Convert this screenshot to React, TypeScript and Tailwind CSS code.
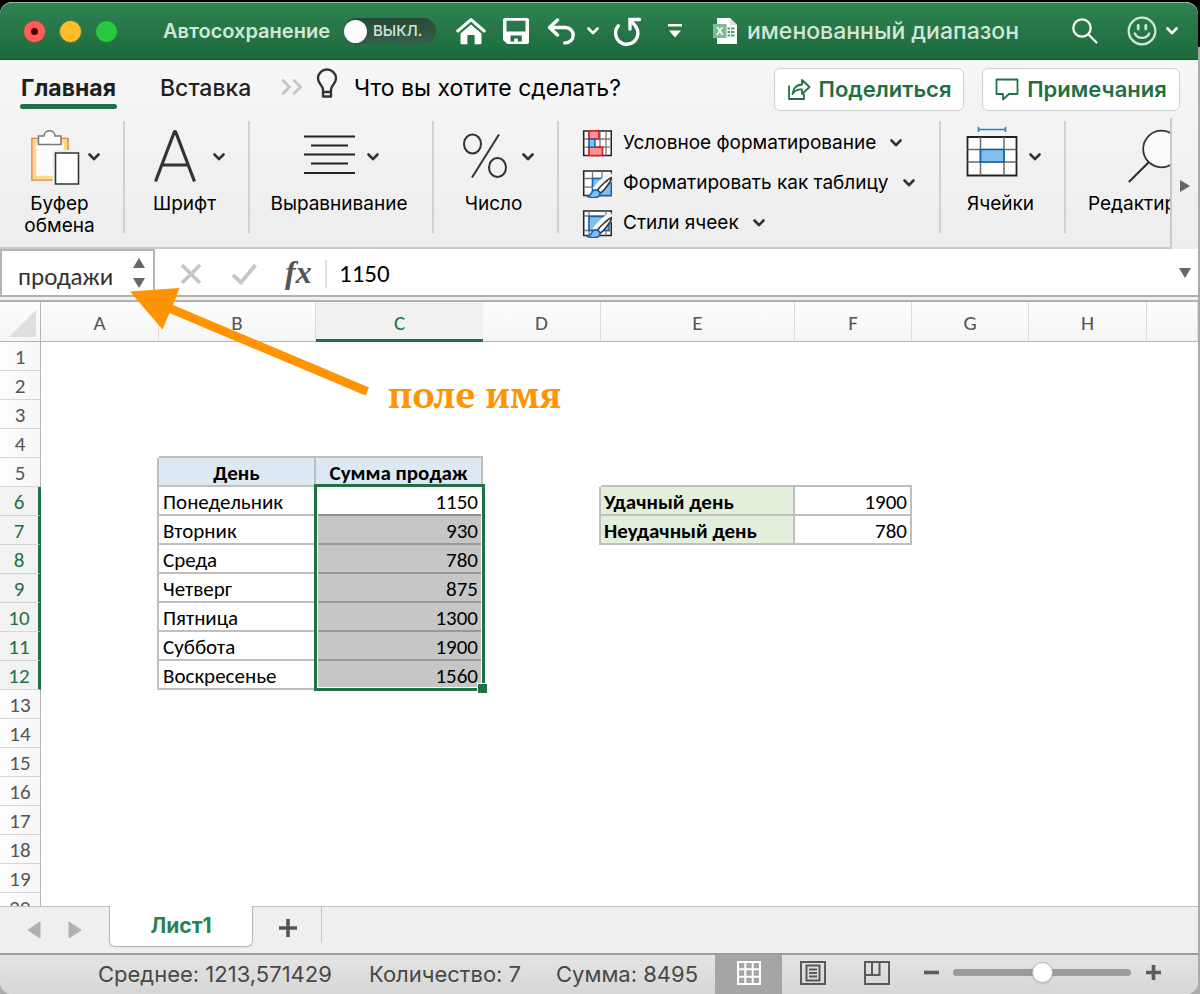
import type { ReactNode } from "react";

const UI = "font-['Inter','Liberation_Sans',sans-serif]";
const SHEET = "font-['Carlito','Lato','Noto_Sans',sans-serif]";

function Chevron({ className = "" }: { className?: string }) {
  return (
    <svg viewBox="0 0 12 8" className={`h-2 w-3 shrink-0 ${className}`} fill="none" stroke="currentColor" strokeWidth="2.6" strokeLinecap="round" strokeLinejoin="round" aria-hidden="true">
      <path d="M1.5 1.5 6 6.2l4.5-4.7" />
    </svg>
  );
}

function TitleBar() {
  return (
    <header className="flex h-[58px] shrink-0 items-center rounded-t-xl border-t border-b border-t-[#8fb8a0] border-b-[#17532f] bg-linear-to-b from-[#2f8252] to-[#1c6a3c] pr-[20px] pl-[23px] text-white">
      <div className="flex gap-[13px]">
        <button aria-label="Закрыть" className="flex size-[23px] items-center justify-center rounded-full border border-[#6b5a3f] bg-[#ff5f57]">
          <span className="size-[7px] rounded-full bg-[#4d0000]" />
        </button>
        <button aria-label="Свернуть" className="size-[23px] rounded-full border border-[#5d7a2c] bg-[#ffbd2e]" />
        <button aria-label="Развернуть" className="size-[23px] rounded-full border border-[#1d7a38] bg-[#28c840]" />
      </div>
      <span className="ml-[45px] w-[181px] text-[20px] font-semibold whitespace-nowrap text-[#d3e6da]">Автосохранение</span>
      <button role="switch" aria-checked="false" aria-label="Автосохранение" className="flex h-[26px] w-[92px] shrink-0 items-center gap-1.5 rounded-full bg-linear-to-b from-[#274a35] to-[#33604a] text-[15px] font-medium text-[#d3e6da]">
        <span className="size-[23px] rounded-full bg-white shadow" />
        ВЫКЛ.
      </button>
      <button aria-label="Домой" className="ml-5">
        <svg viewBox="0 0 30 28" className="h-7 w-[30px]" aria-hidden="true">
          <path d="M1.8 14 15 2.6 28.2 14" fill="none" stroke="white" strokeWidth="3" strokeLinecap="round" strokeLinejoin="round" />
          <path d="M4.5 16.5 15 7.6l10.5 8.9V26a1.2 1.2 0 0 1-1.2 1.2H18.600V18h-7.200v9.200H5.700A1.200 1.200 0 0 1 4.500 26Z" fill="white" />
        </svg>
      </button>
      <button aria-label="Сохранить" className="ml-4">
        <svg viewBox="0 0 28 28" className="size-7" aria-hidden="true">
          <path fill="white" fillRule="evenodd" d="M3 1h22a2 2 0 0 1 2 2v22a2 2 0 0 1-2 2H5.500L1 23V3a2 2 0 0 1 2-2Zm1.500 2.800v10.700h19V3.800Zm4 14.700v6h3.700v-3h3.600v3h4v-6Z" />
        </svg>
      </button>
      <button aria-label="Отменить" className="ml-[17px]">
        <svg viewBox="0 0 30 28" className="h-7 w-[30px]" fill="none" stroke="white" strokeWidth="3.400" strokeLinecap="round" strokeLinejoin="round" aria-hidden="true">
          <path d="M10.500 3 2.500 10.500l8 7.500M3 10.500h15.500a7.700 7.700 0 0 1 0 15.400h-.8" />
        </svg>
      </button>
      <button aria-label="Список отмены" className="ml-[10px]"><Chevron /></button>
      <button aria-label="Повторить" className="ml-[15px]">
        <svg viewBox="0 0 30 30" className="size-[30px]" fill="none" stroke="white" strokeWidth="3.400" strokeLinecap="round" aria-hidden="true">
          <path d="M4.200 9.800A11.200 11.200 0 1 0 21.800 10.500" />
          <path d="M25.500 3.500H16V13" strokeLinejoin="miter" />
          <path d="m16.500 4 5.300 6.500" />
        </svg>
      </button>
      <button aria-label="Настроить панель" className="ml-6">
        <svg viewBox="0 0 14 16" className="h-4 w-3.5" fill="white" aria-hidden="true">
          <path d="M0 1h14v2.600H0ZM1 7.500h12L7 14.500Z" />
        </svg>
      </button>
      <svg viewBox="0 0 26 30" className="ml-[31px] h-[30px] w-[26px] shrink-0" aria-hidden="true">
        <path d="M4 2h13l7 7v19H4Z" fill="white" />
        <path d="M17 2v7h7Z" fill="#d5e3da" />
        <rect x="0" y="8" width="13.500" height="14" fill="#7db897" />
        <text x="6.700" y="19" textAnchor="middle" fontFamily="Inter" fontSize="11" fontWeight="600" fill="white">X</text>
        <path d="M14.500 12.500h2.500m1 0h3.500m-7 3.500h2.500m1 0h3.500m-7 3.500h2.500m1 0h3.500" stroke="#4b9a70" strokeWidth="1.800" />
      </svg>
      <h1 className="ml-2 flex-1 text-[23px] leading-8 font-medium whitespace-nowrap text-[#d3e6da]">именованный диапазон</h1>
      <button aria-label="Поиск">
        <svg viewBox="0 0 28 28" className="size-7" fill="none" stroke="white" strokeWidth="2.200" strokeLinecap="round" aria-hidden="true">
          <circle cx="11" cy="11" r="8.700" /><path d="m17.500 17.500 8 8" />
        </svg>
      </button>
      <button aria-label="Отзыв" className="ml-7 flex items-center gap-[9px]">
        <svg viewBox="0 0 30 30" className="size-[30px]" fill="none" stroke="#d3e6da" strokeWidth="2.300" strokeLinecap="round" aria-hidden="true">
          <circle cx="15" cy="15" r="13.300" /><path d="M11.200 9.500v3.500m7.600-3.500v3.500" strokeWidth="2.800" /><path d="M7.800 17.500c2.500 5.800 11.900 5.800 14.400 0" />
        </svg>
        <Chevron />
      </button>
    </header>
  );
}

function TabRow() {
  return (
    <nav className="flex h-[58px] shrink-0 items-center pr-[18px] pl-5 text-[#1f1f1f]">
      <button className="mt-1 flex w-[97px] flex-col text-[23px] leading-7 font-bold whitespace-nowrap">
        Главная
        <span className="mt-0.5 h-[5px] w-full rounded-full bg-[#1f7145]" />
      </button>
      <button className="mb-0.5 ml-[43px] w-[92px] text-left text-[23px] font-medium whitespace-nowrap">Вставка</button>
      <button aria-label="Другие вкладки" className="mb-1 ml-[29px]">
        <svg viewBox="0 0 22 16" className="h-4 w-[22px]" fill="none" stroke="#c4c4c4" strokeWidth="2.600" strokeLinecap="round" aria-hidden="true">
          <path d="m2 1.500 6.500 6.500L2 14.500m11-13L19.500 8 13 14.500" />
        </svg>
      </button>
      <button className="mb-0.5 ml-[13px] flex items-center gap-4 text-[23px] text-black">
        <svg viewBox="0 0 22 32" className="mb-2 h-8 w-[22px]" fill="none" stroke="#333" strokeWidth="2.400" aria-hidden="true">
          <path d="M7 24v-2.500C7 17.500 2 15.500 2 10.500a9 9 0 0 1 18 0c0 5-5 7-5 11V24Z M7 24v4.500h8V24" strokeLinejoin="round" />
        </svg>
        <span className="whitespace-nowrap">Что вы хотите сделать?</span>
      </button>
      <div className="ml-auto flex gap-[18px] text-[22px] font-semibold text-[#1f7145]">
        <button className="flex h-[43px] w-[190px] items-center justify-center gap-2 rounded-md border border-[#cfcfcf] bg-white">
          <svg viewBox="0 0 24 24" className="size-6 shrink-0" fill="none" stroke="currentColor" strokeWidth="1.800" strokeLinejoin="round" aria-hidden="true">
            <path d="M2 8.500V22h15v-5" /><path d="M5.500 17c.8-6 4.500-9.300 9.500-9.500V3l7.500 7-7.500 7v-4.500c-4-.3-7 1-9.500 4.500Z" />
          </svg>
          Поделиться
        </button>
        <button className="flex h-[43px] w-[198px] items-center justify-center gap-2 rounded-md border border-[#cfcfcf] bg-white">
          <svg viewBox="0 0 24 24" className="size-6 shrink-0" fill="none" stroke="currentColor" strokeWidth="1.800" strokeLinejoin="round" aria-hidden="true">
            <path d="M1.500 2.500h21V17H14l-6 5.500V17H1.500Z" />
          </svg>
          Примечания
        </button>
      </div>
    </nav>
  );
}

function IconBox({ children }: { children: ReactNode }) {
  return (
    <svg viewBox="0 0 56 64" className="h-16 w-14 shrink-0" fill="none" aria-hidden="true">
      {children}
    </svg>
  );
}

function Group({ label, width, icon }: { label: string; width: string; icon: ReactNode }) {
  return (
    <button className={`flex h-28 shrink-0 flex-col items-center border-r-2 border-[#d0d0d0] pt-0.5 ${width}`}>
      <span className="flex items-center gap-2 text-[#333]">{icon}<Chevron className="mt-1" /></span>
      <span className="mt-1.5 pr-1 text-[19px] leading-[22px] whitespace-pre text-black">{label}</span>
    </button>
  );
}

function Brush() {
  return (
    <>
      <path d="M30.500 7C26 9 18 17 14 22" stroke="#f4f4f4" strokeWidth="9" />
      <path d="M29.800 8.500C26 10 18 17.500 15.500 21l3.300 3C22.500 21 29 13 29.800 8.500Z" fill="white" stroke="#333" strokeWidth="1.600" />
      <path d="M5 27c3 0 4-1.500 4.800-3.500.9-2.600 4.600-3.600 7-1.200 2.200 2.300 1.200 5-2 6-3.400 1-7.300.2-9.800-1.300Z" fill="#83beec" stroke="#0f62b5" strokeWidth="1.600" />
    </>
  );
}

function StyleItem({ label, icon }: { label: string; icon: ReactNode }) {
  return (
    <button className="flex h-10 items-center text-[19px] whitespace-nowrap text-black">
      <svg viewBox="0 0 30 29" className="mr-[11px] h-[29px] w-[30px]" fill="none" aria-hidden="true">{icon}</svg>
      {label}
      <Chevron className="ml-3.5 text-[#333]" />
    </button>
  );
}

function Ribbon() {
  return (
    <div className="flex h-[131px] shrink-0">
      <div className="flex min-w-0 flex-1 overflow-hidden border-r-2 border-b-2 border-[#c9c9c9] pt-[3px]">
        <Group label={"Буфер\nобмена"} width="w-[125px]" icon={
          <IconBox>
            <path d="M8 15.500h36v41.500H8Z" fill="#fbfbfb" stroke="#e8833a" strokeWidth="1.600" />
            <path d="M10.500 18h31v36.500h-31Z" stroke="#f9d98c" strokeWidth="3.500" />
            <path d="M14.500 21.500V13H20c.5-7 10.500-7 11 0h6v8.500Z" fill="white" stroke="#777" strokeWidth="1.500" />
            <path d="M28.500 27H54v36H28.500Z" fill="#efefef" />
            <path d="M31.500 30h23v31h-23Z" fill="white" stroke="#333" strokeWidth="1.600" />
          </IconBox>
        } />
        <Group label="Шрифт" width="w-[125px]" icon={
          <IconBox>
            <path d="M6.500 58.500 25.500 8.500h1L45.500 58.500M13 42h26.500" stroke="#333" strokeWidth="3.200" strokeLinejoin="bevel" />
          </IconBox>
        } />
        <Group label="Выравнивание" width="w-[184px]" icon={
          <IconBox>
            <path d="M1 13.500h51M8 22.500h37M1 31.500h51M8 40.500h37M1 50h51" stroke="#222" strokeWidth="2" />
          </IconBox>
        } />
        <Group label="Число" width="w-[125px]" icon={
          <IconBox>
            <ellipse cx="14.500" cy="21" rx="8.500" ry="9.500" stroke="#333" strokeWidth="2" />
            <ellipse cx="39.500" cy="44.500" rx="8.500" ry="9.500" stroke="#333" strokeWidth="2" />
            <path d="M41 11.500 14 54.500" stroke="#333" strokeWidth="2" />
          </IconBox>
        } />
        <div className="h-28 w-[382px] shrink-0 border-r-2 border-[#d0d0d0] pt-0.5 pl-[23px]">
          <StyleItem label="Условное форматирование" icon={
            <>
              <path d="M1.700 2h27.600v24.500H1.700Z" fill="white" stroke="#222" strokeWidth="1.600" />
              <path d="M7 2v24.500M18 2v24.500M24 2v24.500M1.700 10h27.600M1.700 18.200h27.600" stroke="#777" strokeWidth="1.300" />
              <path d="M7 2h10v8H7Zm0 16.200h13.500v8.300H7Z" fill="#ff9292" stroke="#d8221f" strokeWidth="1.700" />
              <path d="M7 10h6v8.200H7Z" fill="#83beec" stroke="#0f62b5" strokeWidth="1.500" />
            </>
          } />
          <StyleItem label="Форматировать как таблицу" icon={
            <>
              <path d="M1.700 2h27.600v24.500H1.700Z" fill="white" stroke="#222" strokeWidth="1.600" />
              <path d="M10.500 2v24.500M20 2v24.500M1.700 9.500h27.600M1.700 18.200h27.600" stroke="#777" strokeWidth="1.300" />
              <path d="M10.500 9.500h18.800v17H10.500Z" fill="#83beec" stroke="#0f62b5" strokeWidth="1.500" />
              <Brush />
            </>
          } />
          <StyleItem label="Стили ячеек" icon={
            <>
              <path d="M1.700 2h27.600v24.500H1.700Z" fill="white" stroke="#222" strokeWidth="1.600" />
              <path d="M7 2v24.500M24 2v24.500M1.700 7h27.600M1.700 21.500h27.600" stroke="#777" strokeWidth="1.300" />
              <path d="M7 7.500h20v14H7Z" fill="#83beec" stroke="#0f62b5" strokeWidth="1.500" />
              <Brush />
            </>
          } />
        </div>
        <Group label="Ячейки" width="w-[125px]" icon={
          <IconBox>
            <path d="M2.500 14H51.500v38.500H2.500Z" fill="white" stroke="#222" strokeWidth="1.800" />
            <path d="M15.500 14v38.500M39 14v38.500M2.500 26.500h49M2.500 39h49" stroke="#6e6a62" strokeWidth="1.500" />
            <path d="M15.500 26.500H39V39H15.500Z" fill="#83beec" stroke="#0f62b5" strokeWidth="1.700" />
            <path d="M13.500 6.500h27M13.500 4v5M40.500 4v5" stroke="#1c86d1" strokeWidth="1.700" />
          </IconBox>
        } />
        <button className="flex h-28 min-w-0 flex-1 flex-col items-start pt-0.5 pl-[22px]">
          <svg viewBox="0 0 80 64" className="ml-10 h-16 w-20 shrink-0" fill="none" stroke="#333" strokeWidth="1.800" aria-hidden="true">
            <circle cx="33.500" cy="26" r="18.300" fill="#fbfbfb" /><path d="M20.500 39.500.8 59" strokeWidth="2.200" />
          </svg>
          <span className="mt-1.5 text-[19px] leading-[22px] whitespace-nowrap text-black">Редактирование</span>
        </button>
      </div>
      <button aria-label="Прокрутить ленту" className="flex w-[26px] shrink-0 items-center pt-1 pl-2">
        <svg viewBox="0 0 10 12" className="h-3 w-2.5" aria-hidden="true"><path d="M0 0v12l10-6Z" fill="#666" /></svg>
      </button>
    </div>
  );
}

function FormulaBar() {
  return (
    <div className="flex h-12 shrink-0 items-center border-b-2 border-[#b0b0b0] bg-white">
      <div className="flex h-full w-[155px] shrink-0 items-center border-2 border-b-0 border-[#b5b5b5] pt-1 pr-[7px] pl-4">
        <input aria-label="Имя" defaultValue="продажи" className={`mt-1 w-[114px] min-w-0 bg-transparent text-[25px] leading-8 text-[#333] outline-none ${SHEET}`} />
        <button aria-label="Выбрать имя" className="mb-1">
          <svg viewBox="0 0 14 32" className="h-8 w-3.5" fill="#666" aria-hidden="true"><path d="M7 1l6 10H1Zm0 30 6-10H1Z" /></svg>
        </button>
      </div>
      <button aria-label="Отмена" className="mt-1 ml-[25px]">
        <svg viewBox="0 0 22 22" className="size-[22px]" stroke="#c6c6c6" strokeWidth="3.800" aria-hidden="true"><path d="m2 2 18 18M20 2 2 20" /></svg>
      </button>
      <button aria-label="Ввод" className="mt-1 ml-[29px]">
        <svg viewBox="0 0 26 22" className="h-[22px] w-[26px]" fill="none" stroke="#c6c6c6" strokeWidth="3.800" aria-hidden="true"><path d="m2 12 8 7.500L24.500 2" /></svg>
      </button>
      <button aria-label="Вставить функцию" className="ml-7 w-8 text-left font-['Liberation_Serif',serif] text-[32px] leading-8 font-bold text-[#555] italic">fx</button>
      <span className="mt-1 ml-2 h-7 w-0.5 bg-[#dedede]" />
      <input aria-label="Строка формул" defaultValue="1150" className={`mt-1 ml-3 min-w-0 flex-1 bg-transparent text-[25px] leading-8 text-black outline-none ${SHEET}`} />
      <button aria-label="Развернуть строку формул" className="mt-0.5 mr-[7px]">
        <svg viewBox="0 0 12 10" className="h-2.5 w-3" aria-hidden="true"><path d="M0 0h12L6 10Z" fill="#666" /></svg>
      </button>
    </div>
  );
}

const columns = ["A", "B", "C", "D", "E", "F", "G", "H", ""];
const colWidths = ["w-[118px]", "w-[157px]", "w-[167px]", "w-[118px]", "w-[194px]", "w-[117px]", "w-[117px]", "w-[118px]", "w-auto"];
const sales: [string, number][] = [
  ["Понедельник", 1150],
  ["Вторник", 930],
  ["Среда", 780],
  ["Четверг", 875],
  ["Пятница", 1300],
  ["Суббота", 1900],
  ["Воскресенье", 1560],
];
const summary: Record<number, [string, number]> = { 6: ["Удачный день", 1900], 7: ["Неудачный день", 780] };

const LINE = "border-[#bfbfbf]";

function Cell({ row, col }: { row: number; col: string }) {
  if (row === 4 && (col === "B" || col === "C")) return <td className={`border-b-2 ${LINE}`} />;
  if (row === 5 && col === "A") return <td className={`border-r-2 ${LINE}`} />;
  if (row === 5 && col === "B") return <td className={`border-r-2 border-b-2 bg-[#dce9f5] text-center font-bold ${LINE}`}>День</td>;
  if (row === 5 && col === "C") return <td className={`border-r-2 border-b-2 bg-[#dce9f5] text-center font-bold whitespace-nowrap ${LINE}`}>Сумма продаж</td>;
  if (row === 5 && (col === "E" || col === "F")) return <td className={`border-b-2 ${LINE}`} />;
  if (row >= 6 && row <= 12) {
    const [day, total] = sales[row - 6];
    if (col === "A") return <td className={`border-r-2 ${LINE}`} />;
    if (col === "B") return <td className={`border-r-2 border-b-2 pl-1 ${LINE}`}>{day}</td>;
    if (col === "C")
      return (
        <td className={`relative border-b-2 pr-[5px] text-right ${row === 6 ? "border-[#8f8f8f] bg-white" : "border-[#999] bg-[#c6c6c6]"}`}>
          {total}
          {row === 6 && (
            <span className="absolute -top-[3px] -right-0.5 -left-0.5 z-10 h-[207px] border-[3px] border-[#1f7145] inset-ring inset-ring-white">
              <span className="absolute -right-[5px] -bottom-[5px] size-[9px] bg-[#1f7145] outline-1 outline-white" />
            </span>
          )}
        </td>
      );
  }
  const entry = summary[row];
  if (entry) {
    if (col === "D") return <td className={`border-r-2 ${LINE}`} />;
    if (col === "E") return <td className={`border-r-2 border-b-2 bg-[#e2efda] pl-[3px] font-bold whitespace-nowrap ${LINE}`}>{entry[0]}</td>;
    if (col === "F") return <td className={`border-r-2 border-b-2 pr-[3px] text-right ${LINE}`}>{entry[1]}</td>;
  }
  return <td />;
}

function Sheet() {
  const rows = Array.from({ length: 20 }, (_, i) => i + 1);
  return (
    <main className="mt-[3px] min-h-0 flex-1 overflow-hidden border-t-2 border-[#b0b0b0] bg-white">
      <table className={`w-full table-fixed border-separate border-spacing-0 text-[21px] leading-6 text-black ${SHEET}`}>
        <thead>
          <tr className="h-10 bg-linear-to-b from-[#fdfdfd] to-[#f5f5f5] text-[#555]">
            <th className="w-[41px] border-r border-b border-[#b5b5b5] p-0 align-bottom">
              <svg viewBox="0 0 27 27" className="mb-1 ml-[9px] size-[27px]" aria-hidden="true"><path d="M27 0v27H0Z" fill="#dedede" /></svg>
            </th>
            {columns.map((c, i) => (
              <th
                key={i}
                scope="col"
                className={`${colWidths[i]} p-0 pt-0.5 font-normal ${c === "C" ? "border-b-[3px] border-[#1f7145] bg-[#f1f1f1] pt-1 text-[#1f7145]" : "border-r border-b border-r-[#dcdcdc] border-b-[#b5b5b5]"}`}
              >
                {c}
              </th>
            ))}
          </tr>
        </thead>
        <tbody>
          {rows.map((r) => {
            const on = r >= 6 && r <= 12;
            return (
              <tr key={r} className="h-[29px] [&>td]:py-0 [&>td]:pt-0.5">
                <th scope="row" className={`border-b border-b-[#d5d5d5] p-0 pt-0.5 font-normal ${on ? "border-r-[3px] border-r-[#1f7145] bg-[#f2f2f2] text-[#1f7145]" : "border-r border-r-[#b5b5b5] bg-linear-to-r from-[#fdfdfd] to-[#f6f6f6] text-[#555]"}`}>{r}</th>
                {columns.map((c, i) => <Cell key={i} row={r} col={c} />)}
              </tr>
            );
          })}
        </tbody>
      </table>
    </main>
  );
}

function SheetTabs() {
  return (
    <div className="flex h-[47px] shrink-0 items-start border-t border-[#c0c0c0] bg-[#efefef]">
      <button aria-label="Предыдущий лист" className="mt-3.5 ml-[27px]">
        <svg viewBox="0 0 14 18" className="h-[18px] w-3.5" aria-hidden="true"><path d="M13 1v16L1 9Z" fill="#b0b0b0" stroke="#b0b0b0" strokeLinejoin="round" /></svg>
      </button>
      <button aria-label="Следующий лист" className="mt-3.5 ml-[27px]">
        <svg viewBox="0 0 14 18" className="h-[18px] w-3.5" aria-hidden="true"><path d="M1 1v16l12-8Z" fill="#b0b0b0" stroke="#b0b0b0" strokeLinejoin="round" /></svg>
      </button>
      <button className="-mt-px ml-[27px] h-[41px] w-[144px] rounded-b-md border border-t-0 border-[#b5b5b5] bg-white text-[21px] font-bold text-[#268350] shadow-xs">Лист1</button>
      <button aria-label="Добавить лист" className="mt-[11px] ml-[25px]">
        <svg viewBox="0 0 20 20" className="size-5" stroke="#555" strokeWidth="3.600" aria-hidden="true"><path d="M10 1v18M1 10h18" /></svg>
      </button>
      <span className="ml-[23px] h-9 w-px bg-[#c4c4c4]" />
    </div>
  );
}

function StatusBar() {
  return (
    <footer className="flex h-[41px] shrink-0 items-center rounded-b-xl border-t-2 border-[#9c9c9c] bg-linear-to-b from-[#e4e4e4] to-[#d6d6d6] pr-[37px] pl-[98px] text-[22px] whitespace-nowrap text-[#484848]">
      <span className="w-[271px]">Среднее: 1213,571429</span>
      <span className="w-[187px]">Количество: 7</span>
      <span className="w-[159px]">Сумма: 8495</span>
      <button aria-label="Обычный" className="flex h-full w-[67px] shrink-0 items-center justify-center bg-[#a5a5a5] pb-1">
        <svg viewBox="0 0 24 24" className="size-6" fill="none" stroke="white" strokeWidth="2" aria-hidden="true"><path d="M1 1h22v22H1ZM8.300 1v22M15.700 1v22M1 8.300h22M1 15.700h22" /></svg>
      </button>
      <div className="flex min-w-0 flex-1 items-center pb-1">
        <button aria-label="Разметка страницы" className="ml-[18px]">
          <svg viewBox="0 0 26 24" className="h-6 w-[26px]" fill="none" stroke="#595959" strokeWidth="2" aria-hidden="true"><path d="M1 1h24v22H1ZM6.500 4.500h13v15h-13ZM9 8.500h8M9 12h8M9 15.500h8" /></svg>
        </button>
        <button aria-label="Страничный режим" className="ml-[38px]">
          <svg viewBox="0 0 26 24" className="h-6 w-[26px]" fill="none" stroke="#595959" strokeWidth="2" aria-hidden="true"><path d="M1 1h24v22H1ZM8 1v13M15.500 1v13H1" /></svg>
        </button>
        <button aria-label="Уменьшить" className="ml-[34px]">
          <svg viewBox="0 0 15 15" className="size-[15px]" stroke="#5c5c5c" strokeWidth="3.600" aria-hidden="true"><path d="M0 7.500h15" /></svg>
        </button>
        <input
          type="range"
          aria-label="Масштаб"
          defaultValue={50}
          className="ml-3.5 h-[7px] min-w-0 flex-1 appearance-none rounded-full bg-[#9b9b9b] [&::-webkit-slider-thumb]:size-[21px] [&::-webkit-slider-thumb]:appearance-none [&::-webkit-slider-thumb]:rounded-full [&::-webkit-slider-thumb]:border [&::-webkit-slider-thumb]:border-[#b5b5b5] [&::-webkit-slider-thumb]:bg-white [&::-webkit-slider-thumb]:shadow"
        />
        <button aria-label="Увеличить" className="ml-[15px]">
          <svg viewBox="0 0 15 15" className="size-[15px]" stroke="#5c5c5c" strokeWidth="3.600" aria-hidden="true"><path d="M0 7.500h15M7.500 0v15" /></svg>
        </button>
      </div>
    </footer>
  );
}

function Callout() {
  return (
    <div className="pointer-events-none absolute top-[286px] left-[130px] z-20 flex items-end text-[#ff9300]">
      <svg viewBox="0 0 240 110" className="h-[110px] w-60 shrink-0" fill="currentColor" aria-hidden="true">
        <path d="M0 3.500 49.500 0 43 17 239 99.500l-3.500 8L39.500 25 32.500 41.500Z" />
      </svg>
      <span className="-mb-5 ml-[18px] font-['PT_Serif','Liberation_Serif',serif] text-[37px] leading-[46px] font-bold whitespace-nowrap">поле имя</span>
    </div>
  );
}

export default function App() {
  return (
    <div className={`h-screen bg-linear-to-b from-black from-[47px] to-[#a9abae] to-[47px] pt-0.5 pr-0.5 ${UI}`}>
      <div className="relative flex h-full flex-col overflow-hidden rounded-xl bg-[#f0f0f0]">
        <TitleBar />
        <div className="flex shrink-0 flex-col bg-linear-to-b from-[#f6f6f6] to-[#ededed]">
          <TabRow />
          <Ribbon />
        </div>
        <FormulaBar />
        <Sheet />
        <SheetTabs />
        <StatusBar />
        <Callout />
      </div>
    </div>
  );
}
